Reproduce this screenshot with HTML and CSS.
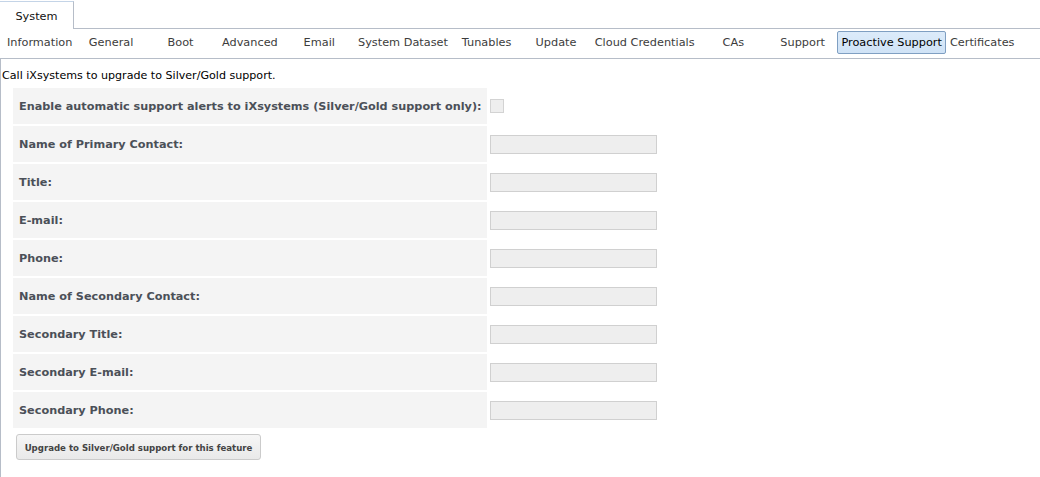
FILE: index.html
```html
<!DOCTYPE html>
<html>
<head>
<meta charset="utf-8">
<link rel="stylesheet" href="styles.css">
</head>
<body>
<div class="tabbar">
  <div class="maintab">System</div>
</div>
<div class="subtabs">
  <div class="st">Information</div>
  <div class="st">General</div>
  <div class="st">Boot</div>
  <div class="st">Advanced</div>
  <div class="st">Email</div>
  <div class="st">System Dataset</div>
  <div class="st">Tunables</div>
  <div class="st">Update</div>
  <div class="st">Cloud Credentials</div>
  <div class="st">CAs</div>
  <div class="st">Support</div>
  <div class="st sel">Proactive Support</div>
  <div class="st">Certificates</div>
</div>
<div class="pane">
  <p class="note">Call iXsystems to upgrade to Silver/Gold support.</p>
  <div class="form">
    <div class="lbl">Enable automatic support alerts to iXsystems (Silver/Gold support only):</div>
    <div class="fld"><span class="chk"></span></div>
    <div class="lbl">Name of Primary Contact:</div>
    <div class="fld"><span class="inp"></span></div>
    <div class="lbl">Title:</div>
    <div class="fld"><span class="inp"></span></div>
    <div class="lbl">E-mail:</div>
    <div class="fld"><span class="inp"></span></div>
    <div class="lbl">Phone:</div>
    <div class="fld"><span class="inp"></span></div>
    <div class="lbl">Name of Secondary Contact:</div>
    <div class="fld"><span class="inp"></span></div>
    <div class="lbl">Secondary Title:</div>
    <div class="fld"><span class="inp"></span></div>
    <div class="lbl">Secondary E-mail:</div>
    <div class="fld"><span class="inp"></span></div>
    <div class="lbl">Secondary Phone:</div>
    <div class="fld"><span class="inp"></span></div>
  </div>
  <button class="btn">Upgrade to Silver/Gold support for this feature</button>
</div>
</body>
</html>
```
FILE: styles.css
```css
html, body {
  margin: 0;
  padding: 0;
  background: #fff;
  font-family: "DejaVu Sans", Verdana, sans-serif;
  height: 477px;
  overflow: hidden;
}
.tabbar {
  display: flex;
  height: 27px;
  padding-top: 1px;
  border-bottom: 1px solid #b6bdc8;
}
.maintab {
  width: 73px;
  height: 27px;
  margin-bottom: -1px;
  box-sizing: content-box;
  background: #fff;
  border-top: 1px solid #c4d4e7;
  border-right: 1px solid #b6bdc8;
  font-size: 11.3px;
  line-height: 29px;
  text-align: center;
  color: #111;
}
.subtabs {
  display: flex;
  height: 27px;
  padding: 2px 0 0 3px;
  border-bottom: 1px solid #b6bdc8;
}
.st {
  min-width: 61.4px;
  height: 21px;
  padding: 0 3px;
  border: 1px solid transparent;
  font-size: 11.3px;
  line-height: 21px;
  text-align: center;
  color: #3c3c3c;
  white-space: nowrap;
}
.st.sel {
  border-color: #7f9fc2;
  border-radius: 2px;
  background: linear-gradient(#dcebfa, #cfe2f6);
  color: #000;
}
.pane {
  border-left: 1px solid #b6bdc8;
  height: 418px;
  padding-left: 1px;
}
.note {
  margin: 0;
  padding-top: 10px;
  font-size: 11.1px;
  line-height: 13px;
  color: #000;
}
.form {
  display: grid;
  grid-template-columns: 474px 180px;
  column-gap: 3px;
  row-gap: 2px;
  margin: 6px 0 0 11px;
}
.lbl {
  height: 36px;
  background: #f4f4f4;
  font-size: 11.25px;
  font-weight: bold;
  color: #4b5058;
  line-height: 37px;
  padding-left: 6px;
  box-sizing: border-box;
  white-space: nowrap;
}
.fld {
  display: flex;
  align-items: center;
}
.chk {
  width: 14px;
  height: 14px;
  box-sizing: border-box;
  border: 1px solid #d3d3d3;
  background: #eee;
}
.inp {
  width: 167px;
  height: 19px;
  box-sizing: border-box;
  border: 1px solid #d0d0d0;
  background: #eee;
}
.btn {
  display: block;
  margin: 6px 0 0 14px;
  width: 245px;
  height: 26px;
  padding: 0;
  border: 1px solid #cbcbcb;
  border-radius: 3px;
  background: linear-gradient(#f6f6f6, #e9e9e9);
  font-family: "DejaVu Sans Condensed", "DejaVu Sans", sans-serif;
  font-size: 9.55px;
  font-weight: bold;
  color: #444;
}
```
